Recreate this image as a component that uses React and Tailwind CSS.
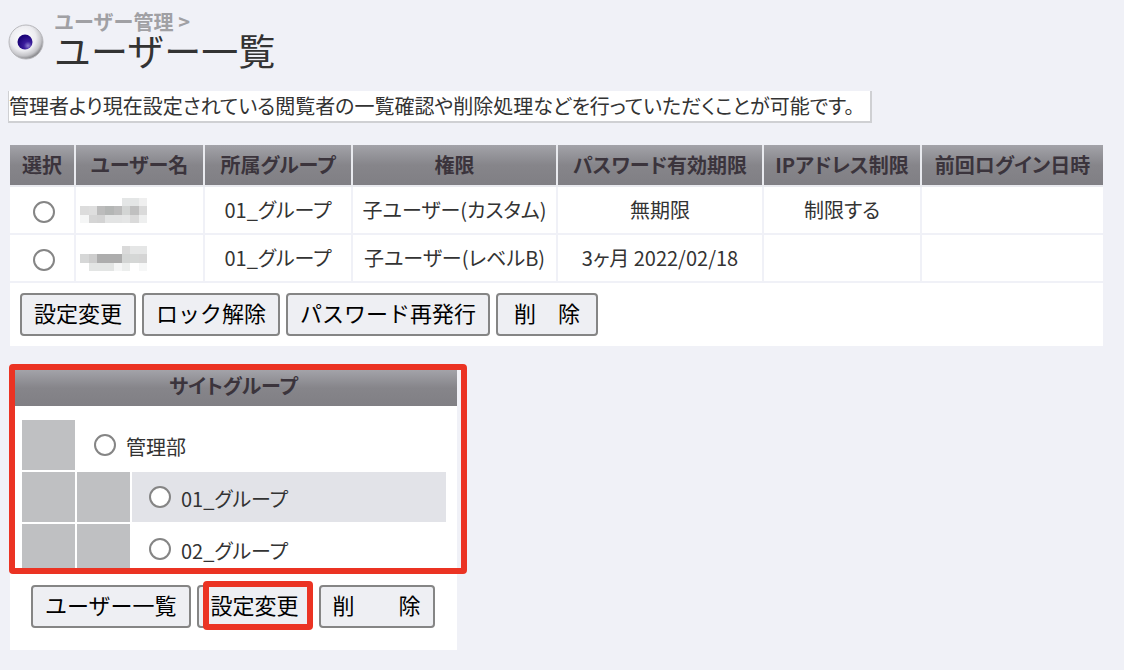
import { useState } from 'react';
import clsx from 'clsx';

const columns = [
  { label: '選択', width: 'w-[65px]' },
  { label: 'ユーザー名', width: 'w-[129px]' },
  { label: '所属グループ', width: 'w-[148px]' },
  { label: '権限', width: 'w-[205px]' },
  { label: 'パスワード有効期限', width: 'w-[206px]' },
  { label: 'IPアドレス制限', width: 'w-[158px]' },
  { label: '前回ログイン日時', width: 'w-[182px]' },
];

const users = [
  {
    id: 1,
    group: '01_グループ',
    role: '子ユーザー(カスタム)',
    expiry: '無期限',
    ip: '制限する',
    lastLogin: '',
    mosaic: [
      ['', '', '', '', '', '#e4e6e6', '#e4e6e6', '#efefef'],
      ['#dcdcdc', '#dedede', '#bcbcbc', '#b4b6b5', '#bcbcbc', '#d3d5d4', '#c0c0c0', '#dadada'],
      ['#f5f6f6', '#d5d5d5', '#d3d3d3', '#e3e4e4', '#e3e4e4', '#e5e6e6', '#dadada', '#eeefef'],
    ],
  },
  {
    id: 2,
    group: '01_グループ',
    role: '子ユーザー(レベルB)',
    expiry: '3ヶ月 2022/02/18',
    ip: '',
    lastLogin: '',
    mosaic: [
      ['', '', '', '', '', '#dadada', '#e5e6e6', '#e5e6e6'],
      ['#d6d7d7', '#cdcdcd', '#adadad', '#adadad', '#adadad', '#d3d5d4', '#d5d7d6', '#d5d5d5'],
      ['', '#e3e5e4', '#e3e5e4', '#e3e5e4', '#f5f6f6', '#eceeed', '', '#f6f7f7'],
    ],
  },
];

const groups = [
  { id: 'g0', name: '管理部', depth: 1 },
  { id: 'g1', name: '01_グループ', depth: 2, striped: true },
  { id: 'g2', name: '02_グループ', depth: 2 },
];

const headerBg = 'bg-linear-to-b from-[#a3a3a9] via-[#86858a] to-[#807f84]';

const Button = ({ wide, children }) => (
  <button
    type="button"
    className={clsx(
      'h-[43px] pb-1.5 border-2 border-[#858585] rounded-[4px] bg-[#eeeff3] text-[22px] leading-none whitespace-pre text-black',
      wide ? 'px-4' : 'px-3'
    )}
  >
    {children}
  </button>
);

const Radio = (props) => (
  <input
    type="radio"
    className="appearance-none shrink-0 size-[22px] rounded-full border-2 border-[#858585] bg-white checked:bg-[#555] checked:shadow-[inset_0_0_0_4px_white]"
    {...props}
  />
);

// Masked user name
const Mosaic = ({ blocks }) => (
  <svg viewBox="0 0 8 3" className="block w-[67px] h-[25px]" shapeRendering="crispEdges" role="img" aria-label="ユーザー名">
    {blocks.map((row, y) =>
      row.map((fill, x) => fill && <rect key={`${x}-${y}`} x={x} y={y} width="1" height="1" fill={fill} />)
    )}
  </svg>
);

const Bullet = () => (
  <svg viewBox="0 0 36 36" className="mt-3 size-9 shrink-0" aria-hidden="true">
    <defs>
      <radialGradient id="ball" cx="0.42" cy="0.38" r="0.62">
        <stop offset="0" stopColor="#ffffff" />
        <stop offset="0.6" stopColor="#ececf0" />
        <stop offset="0.85" stopColor="#c4c4c8" />
        <stop offset="1" stopColor="#88888c" />
      </radialGradient>
      <radialGradient id="pupil" cx="0.7" cy="0.75" r="0.7">
        <stop offset="0" stopColor="#8f80d0" />
        <stop offset="0.4" stopColor="#3a1c9c" />
        <stop offset="1" stopColor="#1c0478" />
      </radialGradient>
    </defs>
    <circle cx="18" cy="18" r="17" fill="url(#ball)" stroke="#b8b8bc" strokeWidth="1" />
    <circle cx="17" cy="18" r="7.5" fill="url(#pupil)" />
  </svg>
);

const App = () => {
  const [user, setUser] = useState(null);
  const [group, setGroup] = useState(null);

  return (
    <div className="min-h-screen bg-[#f0f1f7] pt-3 pl-2 pr-[21px] pb-5 font-['Noto_Sans_CJK_JP',sans-serif] text-[20px] text-[#333]">
      <header className="flex items-start gap-2.5">
        <Bullet />
        <div>
          <p className="leading-5 font-bold text-[#a0a0a4]">ユーザー管理 &gt;</p>
          <h1 className="text-[37px] leading-9">ユーザー一覧</h1>
        </div>
      </header>

      <p className="mt-[23px] w-fit border-l border-r-2 border-b-2 border-[#cfd0d3] bg-white pr-4 leading-[30px] [font-feature-settings:'palt']">
        管理者より現在設定されている閲覧者の一覧確認や削除処理などを行っていただくことが可能です。
      </p>

      <section className="mt-[22px] pl-0.5">
        <table className="w-full table-fixed border-collapse bg-white [font-feature-settings:'palt']">
          <thead>
            <tr className="h-[41px]">
              {columns.map(({ label, width }) => (
                <th
                  key={label}
                  className={clsx(width, headerBg, 'border-r-2 border-b-2 border-[#e9eaef] last:border-r-0 whitespace-nowrap font-bold leading-6 text-[#3b343c]')}
                >
                  {label}
                </th>
              ))}
            </tr>
          </thead>
          <tbody>
            {users.map((u) => (
              <tr key={u.id} className="h-12 text-center whitespace-nowrap *:border-r-2 *:border-b-2 *:border-[#f0f1f7] *:last:border-r-0 leading-6">
                <td>
                  <div className="flex justify-center pl-1 pt-1">
                    <Radio name="user" aria-label="選択" checked={user === u.id} onChange={() => setUser(u.id)} />
                  </div>
                </td>
                <td className="pl-1">
                  <Mosaic blocks={u.mosaic} />
                </td>
                <td>{u.group}</td>
                <td>{u.role}</td>
                <td>{u.expiry}</td>
                <td>{u.ip}</td>
                <td>{u.lastLogin}</td>
              </tr>
            ))}
          </tbody>
        </table>
        <div className="flex flex-wrap gap-1.5 bg-white px-2.5 py-2.5">
          <Button>設定変更</Button>
          <Button>ロック解除</Button>
          <Button>パスワード再発行</Button>
          <Button wide>削　除</Button>
        </div>
      </section>

      <section className="mt-6 ml-0.5 w-full max-w-[447px] bg-white">
        <div className="relative">
          <h2 className={clsx(headerBg, "h-9 text-center font-bold leading-8 text-[#3b343c] [font-feature-settings:'palt']")}>
            サイトグループ
          </h2>
          <div className="flex flex-col gap-0.5 pt-3.5 pl-3 pr-[11px]">
            {groups.map((g) => (
              <div key={g.id} className="flex gap-0.5 h-[50px]">
                {Array.from({ length: g.depth }, (_, i) => (
                  <span key={i} className="w-[53px] shrink-0 bg-[#bfc0c2]" />
                ))}
                <label className={clsx("flex grow items-center gap-2.5 pl-[17px] [font-feature-settings:'palt']", g.striped && 'bg-[#e2e3e8]')}>
                  <Radio name="group" checked={group === g.id} onChange={() => setGroup(g.id)} />
                  <span className="pt-1 leading-6">{g.name}</span>
                </label>
              </div>
            ))}
          </div>
          <div className="pointer-events-none absolute -top-1.5 -left-px -right-2.5 bottom-0 rounded-[4px] border-6 border-[#eb3323]" />
        </div>
        <div className="flex flex-wrap gap-1.5 pt-[11px] pb-[22px] pl-[21px]">
          <Button>ユーザー一覧</Button>
          <div className="relative">
            <Button>設定変更</Button>
            <div className="pointer-events-none absolute -top-1 left-1.5 right-0 -bottom-0.5 rounded-[4px] border-6 border-[#eb3323]" />
          </div>
          <Button>削　　除</Button>
        </div>
      </section>
    </div>
  );
};

export default App;
